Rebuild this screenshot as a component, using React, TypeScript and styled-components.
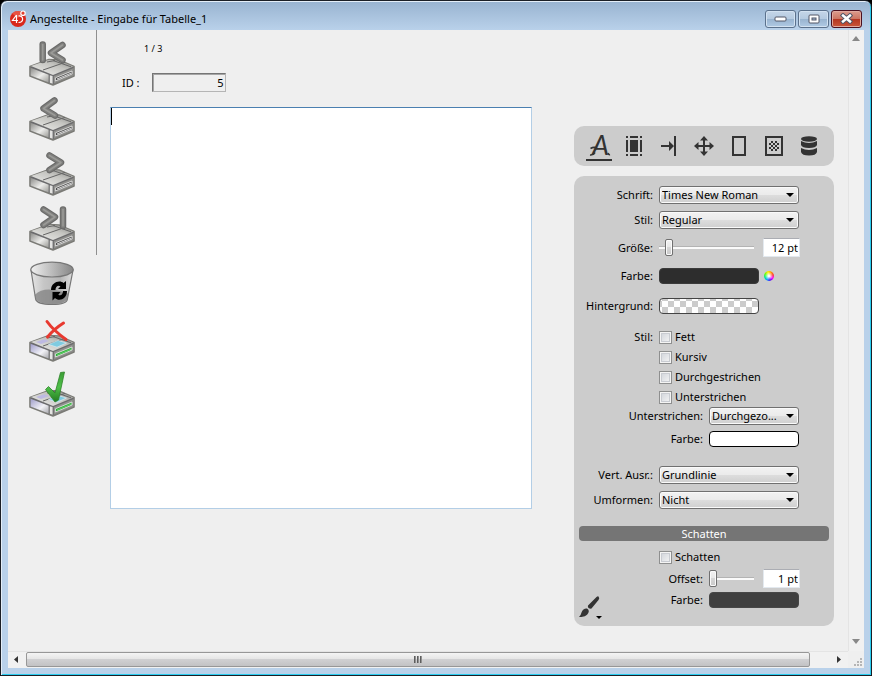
import React, { useState } from "react";
import styled, { createGlobalStyle, css } from "styled-components";

const GlobalStyle = createGlobalStyle`
  *, *::before, *::after { box-sizing: border-box; }
  body { margin: 0; background: #000; }
  body, button, input, select, textarea {
    font-family: "Noto Sans", "Open Sans", sans-serif;
    font-size: 11px;
    line-height: 16px;
    color: #000;
  }
`;

/* ---------- window frame ---------- */

const Window = styled.div`
  min-height: 100vh;
  display: flex;
  flex-direction: column;
  padding: 0 7px 7px 7px;
  border: 1px solid #1b1f26;
  border-radius: 7px 7px 0 0;
  background: linear-gradient(#98b3d0, #b9d1ea 29px, #b9d1ea);
  box-shadow: inset 1px 1px 0 #e4eef8, inset -1px -1px 0 #29cdf0;
`;

const TitleBar = styled.header`
  height: 29px;
  display: flex;
  align-items: center;
  gap: 3px;
  padding: 6px 2px 0 1px;
`;

const Title = styled.h1`
  flex: 1;
  margin: 0;
  font-size: 11px;
  font-weight: 400;
  line-height: 16px;
  white-space: nowrap;
`;

const WindowButtons = styled.div`
  display: flex;
  gap: 2px;
`;

const WindowButton = styled.button<{ $close?: boolean }>`
  width: 31px;
  height: 18px;
  padding: 0;
  display: flex;
  align-items: center;
  justify-content: center;
  border: 1px solid ${(p) => (p.$close ? "#4b1020" : "#5b718c")};
  border-radius: 3px;
  box-shadow: inset 0 0 0 1px ${(p) => (p.$close ? "#e0a99f" : "#d3e2f1")};
  background: ${(p) =>
    p.$close
      ? "linear-gradient(#dc9c8e, #cc7664 48%, #b43521 50%, #c9573c)"
      : "linear-gradient(#c5d6e8, #b5cae0 48%, #98b3cf 50%, #b0cae4)"};
`;

const Client = styled.div`
  flex: 1;
  display: grid;
  grid-template-columns: minmax(0, 1fr) 16px;
  grid-template-rows: 1fr 17px;
  background: #efefef;
`;

const Form = styled.main`
  display: flex;
  align-items: flex-start;
`;

/* ---------- scroll bars ---------- */

const ScrollBar = styled.div<{ $vertical?: boolean }>`
  display: flex;
  align-items: center;
  justify-content: space-between;
  background: #f1f1f1;
  ${(p) =>
    p.$vertical
      ? css`
          flex-direction: column;
          border-left: 1px solid #e4e4e4;
          padding: 6px 1px 6px 0;
        `
      : css`
          border-top: 1px solid #e4e4e4;
          padding: 0 7px 1px 6px;
        `}
`;

const ScrollArrow = styled.button`
  display: flex;
  padding: 0;
  border: 0;
  background: none;
`;

const ScrollThumb = styled.div`
  flex: 1;
  height: 15px;
  margin: 0 27px 0 8px;
  display: flex;
  align-items: center;
  justify-content: center;
  gap: 1px;
  border: 1px solid #979797;
  border-radius: 2px;
  background: linear-gradient(#f4f4f4, #e6e6e6 45%, #d0d0d2 50%, #c2c2c4);
`;

const Grip = styled.span`
  width: 2px;
  height: 7px;
  background: linear-gradient(90deg, #444, #aaa);
`;

const Corner = styled.div`
  display: flex;
  align-items: flex-end;
  justify-content: flex-end;
  padding: 2px;
`;

/* ---------- record navigation ---------- */

const Records = styled.nav`
  width: 89px;
`;

const RecordGroup = styled.div<{ $ruled?: boolean }>`
  height: ${(p) => (p.$ruled ? "225px" : "auto")};
  display: flex;
  flex-direction: column;
  gap: 9px;
  padding: ${(p) => (p.$ruled ? "10px 0 0 21px" : "6px 1px 0 21px")};
  border-right: ${(p) => (p.$ruled ? "1px solid #8f8f8f" : "0")};
`;

const RecordButton = styled.button`
  width: 48px;
  height: 46px;
  padding: 0;
  border: 0;
  background: none;
  svg { display: block; }
`;

/* ---------- record ---------- */

const Record = styled.section`
  flex: 1;
  min-width: 0;
  padding-left: 13px;
`;

const Counter = styled.p`
  margin: 0;
  padding: 12px 0 0 34px;
  font-size: 9px;
  line-height: 13px;
`;

const IdRow = styled.div`
  display: flex;
  align-items: center;
  gap: 12px;
  padding: 18px 0 15px 12px;
`;

const IdInput = styled.input`
  width: 74px;
  height: 19px;
  padding: 0 1px;
  text-align: right;
  border: 1px solid #b5b5b5;
  border-top-color: #757575;
  border-left-color: #757575;
  box-shadow: inset 1px 1px 0 #a5a5a5;
  background: #efefef;
  border-radius: 0;
`;

const Editor = styled.textarea`
  display: block;
  width: 100%;
  height: 402px;
  padding: 2px;
  resize: none;
  outline: 0;
  border: 1px solid #b3cee6;
  border-top-color: #4a7fb0;
  border-radius: 0;
  background: linear-gradient(#000, #000) 0 0 / 1px 17px no-repeat #fff;
`;

/* ---------- format palette ---------- */

const Palette = styled.aside`
  width: 260px;
  margin: 96px 14px 24px 42px;
  display: flex;
  flex-direction: column;
  gap: 10px;
`;

const Tabs = styled.div`
  height: 40px;
  display: flex;
  align-items: center;
  padding: 0 8px 0 7px;
  border-radius: 10px;
  background: #ccc;
`;

const Tab = styled.button`
  flex: 1;
  height: 40px;
  padding: 0;
  display: flex;
  align-items: center;
  justify-content: center;
  border: 0;
  background: none;
  color: #333;
`;

const LetterText = styled.text`
  font-family: Lato, sans-serif;
  font-size: 27px;
  font-style: italic;
`;

const Panel = styled.div`
  padding: 6px 0;
  border-radius: 10px;
  background: #ccc;
`;

const Section = styled.div<{ $before?: number }>`
  padding-top: ${(p) => p.$before ?? 0}px;
`;

const Row = styled.div<{ $height: number }>`
  height: ${(p) => p.$height}px;
  display: flex;
  align-items: center;
  padding-right: 34px;
`;

const Label = styled.label<{ $wide?: boolean }>`
  width: ${(p) => (p.$wide ? 129 : 79)}px;
  margin-right: 6px;
  text-align: right;
  white-space: nowrap;
`;

const SelectBox = styled.span`
  flex: 1;
  position: relative;
  display: flex;
  margin-right: 1px;
  &::after {
    content: "";
    position: absolute;
    right: 5px;
    top: 7px;
    border: 4px solid transparent;
    border-top: 4px solid #000;
    border-bottom: 0;
    pointer-events: none;
  }
`;

const Select = styled.select`
  appearance: none;
  width: 100%;
  height: 18px;
  padding: 0 0 0 2px;
  border: 1px solid #707070;
  border-radius: 3px;
  box-shadow: inset 0 0 0 1px #fafafa;
  background: linear-gradient(#f2f2f2, #ebebeb 48%, #dddddd 50%, #cfcfcf);
`;

const Slider = styled.input`
  appearance: none;
  flex: 1;
  min-width: 0;
  height: 18px;
  margin: 0 9px 0 0;
  background: none;
  &::-webkit-slider-runnable-track {
    height: 3px;
    border-top: 1px solid #b3b3b3;
    background: #fafafa;
  }
  &::-webkit-slider-thumb {
    appearance: none;
    width: 8px;
    height: 17px;
    margin-top: -8px;
    border: 1px solid #707070;
    border-radius: 2px;
    box-shadow: inset 0 0 0 1px #fafafa;
    background: linear-gradient(#f2f2f2, #e8e8e8 48%, #d6d6d6 50%, #cacaca);
  }
`;

const PointInput = styled.input`
  width: 37px;
  height: 19px;
  padding: 0 1px;
  text-align: right;
  border: 1px solid #e3e9ef;
  border-top-color: #abadb3;
  border-radius: 0;
  background: #fff;
`;

const Swatch = styled.button<{ $fill: string; $line: string; $wide?: boolean }>`
  width: ${(p) => (p.$wide ? 100 : 90)}px;
  height: 16px;
  padding: 0;
  border: 1px solid ${(p) => p.$line};
  border-radius: 4px;
  background: ${(p) => p.$fill};
`;

const Wheel = styled.button`
  width: 10px;
  height: 10px;
  margin-left: 5px;
  padding: 0;
  border: 0;
  border-radius: 50%;
  background:
    radial-gradient(circle, #fff 8%, transparent 60%),
    conic-gradient(from 30deg, #ff9500, #f33, #f0f, #40f, #0af, #0e8, #6f0, #fe0, #ff9500);
`;

const CheckLabel = styled.label`
  display: flex;
  align-items: center;
  gap: 3px;
  margin-left: auto;
  flex: 0 0 141px;
`;

const Check = styled.input`
  appearance: none;
  width: 13px;
  height: 13px;
  margin: 0;
  border: 1px solid #8e8f8f;
  box-shadow: inset 0 0 0 1px #f4f4f4, inset 0 0 0 2px #c9ccd2;
  background: linear-gradient(135deg, #cdd1d8, #f8f8f8);
  &:checked { background: #37547f; }
`;

const Heading = styled.h2`
  height: 15px;
  margin: 14px 5px 6px;
  border-radius: 4px;
  background: #757575;
  color: #fff;
  font-size: 11px;
  font-weight: 400;
  line-height: 15px;
  text-align: center;
`;

const Footer = styled.div`
  display: flex;
  align-items: flex-start;
`;

const BrushButton = styled.button`
  width: 30px;
  height: 30px;
  padding: 4px 0 0 4px;
  border: 0;
  background: none;
  svg { display: block; }
`;

const FooterRow = styled(Row)`
  flex: 1;
  justify-content: flex-end;
  padding-right: 35px;
`;

const FooterLabel = styled.label`
  margin-right: 6px;
`;

/* ---------- drawings ---------- */

const HiddenSvg = styled.svg`
  display: block;
`;

const Gradients = () => (
  <HiddenSvg width="0" height="0" aria-hidden="true">
    <defs>
      <linearGradient id="driveSide" x1="0" y1="0" x2="1" y2="1">
        <stop offset="0" stopColor="#8b8b88" />
        <stop offset=".55" stopColor="#ededeb" />
        <stop offset="1" stopColor="#9a9a96" />
      </linearGradient>
      <linearGradient id="driveTop" x1="0" y1="1" x2="1" y2="0">
        <stop offset="0" stopColor="#f0f0ee" />
        <stop offset=".6" stopColor="#c4c4c0" />
        <stop offset="1" stopColor="#80807d" />
      </linearGradient>
      <linearGradient id="driveSideBlue" x1="0" y1="0" x2="1" y2="1">
        <stop offset="0" stopColor="#9f9dcb" />
        <stop offset=".6" stopColor="#f2f2f6" />
        <stop offset="1" stopColor="#a9a9ae" />
      </linearGradient>
      <linearGradient id="binBody" x1="0" y1="0" x2="1" y2="0">
        <stop offset="0" stopColor="#e6e6e6" />
        <stop offset=".3" stopColor="#c6c6c6" />
        <stop offset=".7" stopColor="#b5b5b5" />
        <stop offset="1" stopColor="#dedede" />
      </linearGradient>
      <linearGradient id="binMouth" x1="0" y1="0" x2="1" y2="0">
        <stop offset="0" stopColor="#f0f0f0" />
        <stop offset="1" stopColor="#868686" />
      </linearGradient>
      <linearGradient id="tick" x1="0" y1="0" x2="0" y2="1">
        <stop offset="0" stopColor="#3c9d35" />
        <stop offset=".5" stopColor="#4fc04a" />
        <stop offset="1" stopColor="#237c1f" />
      </linearGradient>
    </defs>
  </HiddenSvg>
);

const Drive = ({ color, children }: { color?: boolean; children: React.ReactNode }) => (
  <svg width="48" height="46" viewBox="0 0 48 46" aria-hidden="true">
    <path d="M1 26.500 20 19.500 30 20 45 26.500V36L24 45 1 36Z" fill="#6b6b6d" stroke="#7b7b76" strokeWidth="1.600" strokeLinejoin="round" />
    <path d="M2 26 20 19.800 30 20.400 44.500 26.600 24 35Z" fill="url(#driveTop)" />
    <path d="M1.600 27.800 19.600 34.800V42.400L1.600 35.400Z" fill={color ? "url(#driveSideBlue)" : "url(#driveSide)"} />
    <path d="M20.800 35.200 23.600 36V43.800L20.800 42.800Z" fill="#e4e4e2" />
    <path d="M24.800 36 44.600 28V35.400L24.800 43.800Z" fill="#8f8f8c" />
    <path d="M26.400 37.800 43 31V34L26.400 41Z" fill={color ? "#2fae3a" : "#4f4f4f"} stroke="#eee" strokeWidth=".8" />
    <path d="M28 39 42 33.200" stroke={color ? "#5fcf66" : "#d8d8d8"} strokeWidth="1" />
    <path d="M14 30 36 22.400M24 20.500 42 26.800M18 22 26 20.500" stroke="#666" strokeWidth="1" fill="none" />
    {color && <path d="M19.500 28.400 29 24.400 37.500 27 28 31.200Z" fill="#7fcbe0" stroke="#e5f4f8" strokeWidth=".6" />}
    {color && <path d="M7 26 15 23.200 20 25 12 28Z" fill="#bdb9e2" />}
    {children}
  </svg>
);

const Stroke = ({ d }: { d: string }) => (
  <g fill="none" strokeLinecap="round" strokeLinejoin="round">
    <path d={d} stroke="#6a6a69" strokeWidth="6.500" />
    <path d={d} stroke="#7e7e7c" strokeWidth="4.400" />
    <path d={d} stroke="#9a9a97" strokeWidth="1.600" />
  </g>
);

const Bin = () => (
  <svg width="48" height="46" viewBox="0 0 48 46" aria-hidden="true">
    <path d="M2 9 6.600 38Q8 43.500 23 43.500T38.400 38L44 9Z" fill="url(#binBody)" stroke="#777" strokeWidth="1.200" />
    <path d="M5.600 34Q13 27 25 29T39.500 33L38.400 38Q36 43 23 43T6.600 38Z" fill="#808080" opacity=".75" />
    <ellipse cx="23" cy="8.600" rx="21.200" ry="7.400" fill="url(#binMouth)" stroke="#777" strokeWidth="1.200" />
    <path d="M22 29C22 21 31 18.500 34.500 22L37 20V28H29L31.500 25.500C29 23.500 26.500 26 26.500 29Z" fill="#000" />
    <path d="M38 30C38 38 30 41 26 37L23.500 39.500V31H31.500L29.300 33.700C32 35.500 34 33 34 30Z" fill="#000" />
  </svg>
);

const AppLogo = () => (
  <svg width="18" height="18" viewBox="0 0 18 18" aria-hidden="true">
    <circle cx="9" cy="9" r="8" fill="#d9281c" />
    <path d="M3 3.600A8 8 0 0 1 14 3L9 8Z" fill="#ee6554" opacity=".7" />
    <path d="M7.500 5 3.500 10.500H9M7.500 5V13" fill="none" stroke="#fff" strokeWidth="1.200" />
    <path d="M9.500 6C15 5.500 15 12.500 9.500 12.500" fill="none" stroke="#fff" strokeWidth="1.200" />
    <circle cx="14" cy="3.200" r="2.200" fill="#e0402f" stroke="#fff" strokeWidth="1.200" />
  </svg>
);

const Arrow = ({ d, w = 4, h = 7, fill = "#333" }: { d: string; w?: number; h?: number; fill?: string }) => (
  <svg width={w} height={h} viewBox={`0 0 ${w} ${h}`} aria-hidden="true">
    <path d={d} fill={fill} />
  </svg>
);

const tabIcons: [string, React.ReactNode][] = [
  ["Schrift", (
    <svg key="a" width="26" height="40" viewBox="0 0 26 40" fill="#333">
      <LetterText x="6" y="29">A</LetterText>
      <path d="M4.500 22.500Q8 20.500 11 22.200M4 29Q7 29.500 9 26.500M22 27Q22.500 29 24 28.500" fill="none" stroke="#333" strokeWidth="1.600" />
      <path d="M0 33H26V35H0Z" />
    </svg>
  )],
  ["Rahmenabstand", (
    <svg key="m" width="18" height="20" viewBox="0 0 18 20" fill="#333">
      <path d="M5 4H13V16H5ZM1 4H3V16H1ZM15 4H17V16H15ZM5 0H13V2H5ZM5 18H13V20H5ZM1 0H3V2H1ZM15 0H17V2H15ZM1 18H3V20H1ZM15 18H17V20H15Z" />
    </svg>
  )],
  ["Tabulator", (
    <svg key="t" width="16" height="20" viewBox="0 0 16 20" fill="#333">
      <path d="M13 0H15V20H13ZM0 9H8V5L13 10 8 15V11H0Z" />
    </svg>
  )],
  ["Position", (
    <svg key="p" width="20" height="20" viewBox="0 0 20 20" fill="#333">
      <path d="M10 0 14 4.500H11V9H15.500V6L20 10 15.500 14V11H11V15.500H14L10 20 6 15.500H9V11H4.500V14L0 10 4.500 6V9H9V4.500H6Z" />
    </svg>
  )],
  ["Rahmen", (
    <svg key="r" width="14" height="20" viewBox="0 0 14 20">
      <path d="M1 1H13V19H1Z" fill="none" stroke="#333" strokeWidth="2" />
    </svg>
  )],
  ["Hintergrund", (
    <svg key="h" width="18" height="20" viewBox="0 0 18 20" fill="#333">
      <path d="M1 1H17V19H1Z" fill="none" stroke="#333" strokeWidth="2" />
      {[0, 1, 2, 3, 4].flatMap((r) =>
        [0, 1, 2, 3, 4].map((c) =>
          (r + c) % 2 ? <rect key={`${r}${c}`} x={4 + c * 2} y={5 + r * 2} width="2" height="2" /> : null
        )
      )}
    </svg>
  )],
  ["Datenquelle", (
    <svg key="d" width="16" height="20" viewBox="0 0 16 20" fill="#333">
      <ellipse cx="8" cy="3" rx="8" ry="2.700" />
      <path d="M0 5Q8 9 16 5V9Q15 12 8 12T0 9Z" />
      <path d="M0 12Q8 16 16 12V16Q15 19.600 8 19.600T0 16Z" />
    </svg>
  )],
];

/* ---------- form parts ---------- */

const Choice = ({ id, label, value, height = 25, wide }: {
  id: string; label: string; value: string; height?: number; wide?: boolean;
}) => (
  <Row $height={height}>
    <Label htmlFor={id} $wide={wide}>{label}</Label>
    <SelectBox>
      <Select id={id} defaultValue={value}>
        <option>{value}</option>
      </Select>
    </SelectBox>
  </Row>
);

const PointRow = ({ id, label, start, height, wide }: {
  id: string; label: string; start: number; height: number; wide?: boolean;
}) => {
  const [points, setPoints] = useState(start);
  return (
    <Row $height={height}>
      <Label htmlFor={id} $wide={wide}>{label}</Label>
      <Slider
        id={id}
        type="range"
        min={wide ? 1 : 6}
        max={wide ? 40 : 96}
        value={points}
        onChange={(e) => setPoints(Number(e.target.value))}
      />
      <PointInput aria-label={`${label} Wert`} value={`${points} pt`} readOnly />
    </Row>
  );
};

const Tick = ({ text }: { text: string }) => (
  <CheckLabel>
    <Check type="checkbox" />
    {text}
  </CheckLabel>
);

const checker = "repeating-conic-gradient(#ccc 0 25%, #fff 0 50%) 2px 2px / 12px 12px";

export default function App() {
  return (
    <>
      <GlobalStyle />
      <Window>
        <Gradients />
        <TitleBar>
          <AppLogo />
          <Title>Angestellte - Eingabe für Tabelle_1</Title>
          <WindowButtons>
            <WindowButton aria-label="Minimieren">
              <svg width="13" height="6"><rect x="1" y="1" width="11" height="4" rx="1" fill="#fff" stroke="#535666" /></svg>
            </WindowButton>
            <WindowButton aria-label="Maximieren">
              <svg width="12" height="10"><rect x="1" y="1" width="10" height="8" rx="1" fill="#fff" stroke="#535666" /><rect x="4" y="4" width="4" height="2" fill="#a9c0da" stroke="#535666" /></svg>
            </WindowButton>
            <WindowButton $close aria-label="Schließen">
              <svg width="13" height="11" viewBox="0 0 13 11">
                <path d="M3 2.500 10 8.500M10 2.500 3 8.500" stroke="#535666" strokeWidth="4.400" strokeLinecap="square" />
                <path d="M3 2.500 10 8.500M10 2.500 3 8.500" stroke="#fff" strokeWidth="2.400" strokeLinecap="square" />
              </svg>
            </WindowButton>
          </WindowButtons>
        </TitleBar>
        <Client>
          <Form>
            <Records aria-label="Datensätze">
              <RecordGroup $ruled>
                <RecordButton aria-label="Erster Datensatz">
                  <Drive><Stroke d="M13.700 4.500V20" /><Stroke d="M33.500 5 22 13 33.500 20" /></Drive>
                </RecordButton>
                <RecordButton aria-label="Vorheriger Datensatz">
                  <Drive><Stroke d="M25.500 5.500 14.500 13.500 26 20.500" /></Drive>
                </RecordButton>
                <RecordButton aria-label="Nächster Datensatz">
                  <Drive><Stroke d="M20.500 5.500 32 12.500 20.500 20" /></Drive>
                </RecordButton>
                <RecordButton aria-label="Letzter Datensatz">
                  <Drive><Stroke d="M34 4.500V21" /><Stroke d="M14.500 4.500 26 12 14.500 20" /></Drive>
                </RecordButton>
              </RecordGroup>
              <RecordGroup>
                <RecordButton aria-label="Löschen"><Bin /></RecordButton>
                <RecordButton aria-label="Abbrechen">
                  <Drive color>
                    <path d="M18 5.500Q24 14 37 23.500M34.500 7Q25 13 18.500 21" fill="none" stroke="#e8392f" strokeWidth="3" strokeLinecap="round" />
                  </Drive>
                </RecordButton>
                <RecordButton aria-label="Sichern">
                  <Drive color>
                    <path d="M16.500 18.500 19.500 15.500 26 22 31.500 1.500 35.500 1 29.500 29 26 31Z" fill="url(#tick)" stroke="#2d8428" strokeWidth=".8" strokeLinejoin="round" />
                  </Drive>
                </RecordButton>
              </RecordGroup>
            </Records>

            <Record>
              <Counter>1 / 3</Counter>
              <IdRow>
                <label htmlFor="record-id">ID :</label>
                <IdInput id="record-id" defaultValue="5" />
              </IdRow>
              <Editor aria-label="Text" />
            </Record>

            <Palette>
              <Tabs>
                {tabIcons.map(([name, icon]) => (
                  <Tab key={name} aria-label={name}>{icon}</Tab>
                ))}
              </Tabs>
              <Panel>
                <Choice id="font" label="Schrift:" value="Times New Roman" />
                <Choice id="face" label="Stil:" value="Regular" />
                <PointRow id="size" label="Größe:" start={12} height={31} />
                <Row $height={26}>
                  <Label htmlFor="color">Farbe:</Label>
                  <Swatch id="color" $wide $fill="#2d2d2d" $line="#3a3a3a" />
                  <Wheel aria-label="Farbauswahl" />
                </Row>
                <Row $height={34}>
                  <Label htmlFor="back">Hintergrund:</Label>
                  <Swatch id="back" $wide $fill={checker} $line="#444" />
                </Row>
                <Section $before={4}>
                  <Row $height={20}>
                    <Label as="span">Stil:</Label>
                    <Tick text="Fett" />
                  </Row>
                  <Row $height={20}><Tick text="Kursiv" /></Row>
                  <Row $height={20}><Tick text="Durchgestrichen" /></Row>
                  <Row $height={20}><Tick text="Unterstrichen" /></Row>
                </Section>
                <Choice id="underline" label="Unterstrichen:" value="Durchgezo..." height={17} wide />
                <Row $height={30}>
                  <Label htmlFor="line-color" $wide>Farbe:</Label>
                  <Swatch id="line-color" $fill="#fff" $line="#000" />
                </Row>
                <Section $before={8}>
                  <Choice id="align" label="Vert. Ausr.:" value="Grundlinie" />
                  <Choice id="transform" label="Umformen:" value="Nicht" />
                </Section>
                <Heading>Schatten</Heading>
                <Row $height={20}><Tick text="Schatten" /></Row>
                <PointRow id="offset" label="Offset:" start={1} height={23} wide />
                <Footer>
                  <BrushButton aria-label="Format">
                    <svg width="26" height="25" viewBox="0 0 26 25" fill="#333" aria-hidden="true">
                      <path d="M20.500 1.500Q22 3 20.500 5L13.500 13.500Q12 14 10.500 13Q9.500 11.500 10 10.500L18.500 2Q20 .800 20.500 1.500Z" />
                      <path d="M9 13.500Q12 15.500 10 18.500C7.500 22 4 22 1 22Q3 20 3.500 17.500C4.500 14.500 7 13 9 13.500Z" />
                      <path d="M18 21H24L21 24Z" fill="#000" />
                    </svg>
                  </BrushButton>
                  <FooterRow $height={20}>
                    <FooterLabel htmlFor="shadow-color">Farbe:</FooterLabel>
                    <Swatch id="shadow-color" $fill="#3f3f3f" $line="#474747" />
                  </FooterRow>
                </Footer>
              </Panel>
            </Palette>
          </Form>

          <ScrollBar $vertical>
            <ScrollArrow aria-label="Nach oben"><Arrow d="M0 5 4 0 8 5Z" w={8} h={6} fill="#888" /></ScrollArrow>
            <ScrollArrow aria-label="Nach unten"><Arrow d="M0 0H8L4 5Z" w={8} h={6} fill="#888" /></ScrollArrow>
          </ScrollBar>
          <ScrollBar>
            <ScrollArrow aria-label="Nach links"><Arrow d="M4 0V7L0 3.500Z" /></ScrollArrow>
            <ScrollThumb><Grip /><Grip /><Grip /></ScrollThumb>
            <ScrollArrow aria-label="Nach rechts"><Arrow d="M0 0V7L4 3.500Z" /></ScrollArrow>
          </ScrollBar>
          <Corner>
            <svg width="8" height="8" viewBox="0 0 8 8" fill="#b5b5b5" aria-hidden="true">
              <path d="M6 0h2v2h-2zM6 3h2v2h-2zM3 3h2v2h-2zM6 6h2v2h-2zM3 6h2v2h-2zM0 6h2v2h-2z" />
            </svg>
          </Corner>
        </Client>
      </Window>
    </>
  );
}
